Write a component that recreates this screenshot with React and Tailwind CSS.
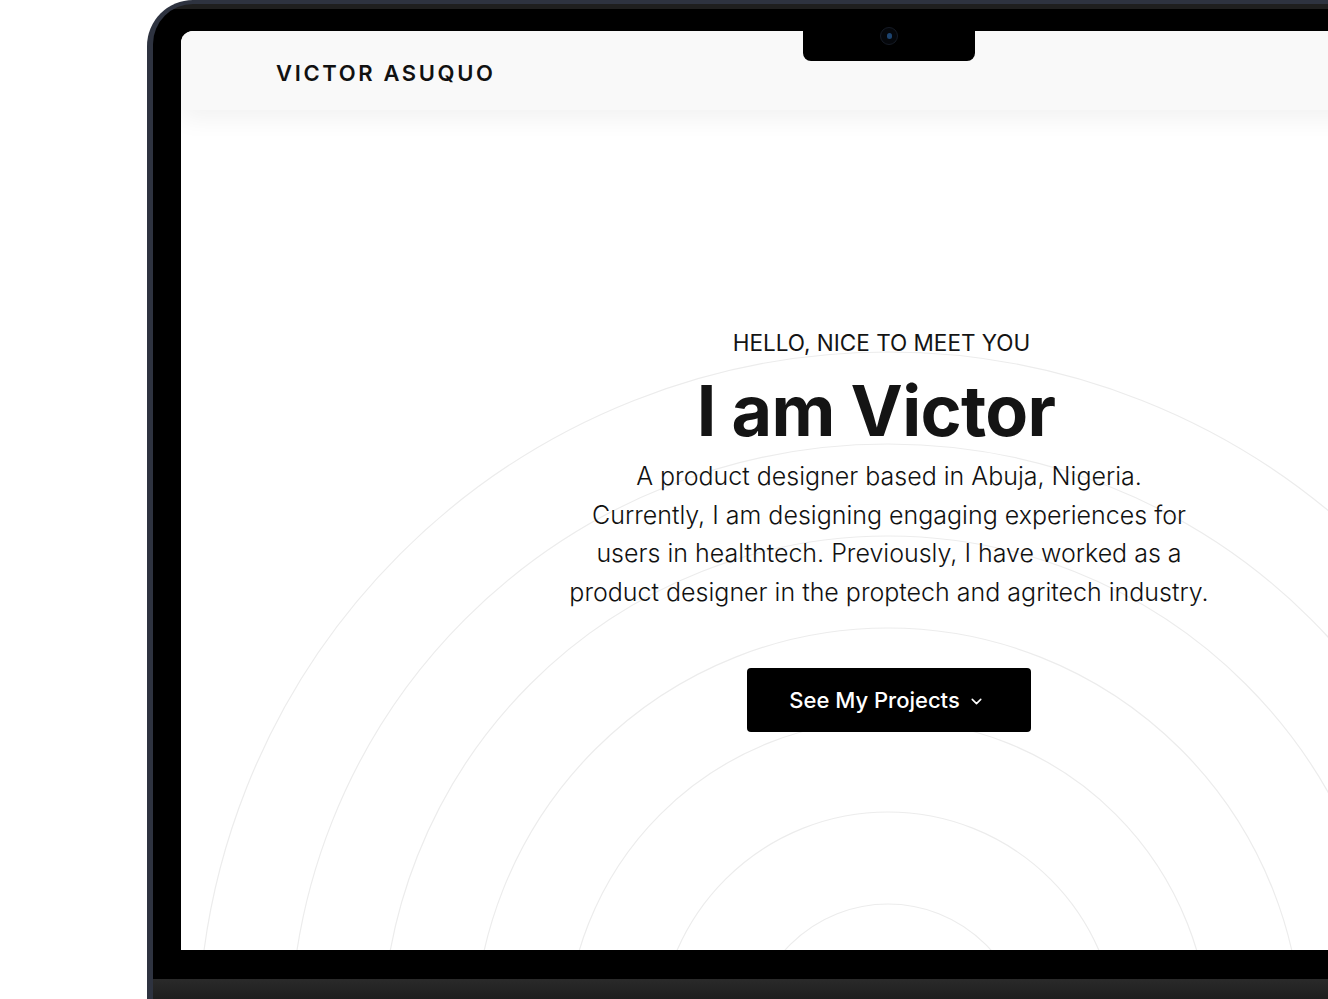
import { ChevronDown } from 'lucide-react';

// radii of the faint rings behind the hero
const RINGS = [138, 230, 322, 414, 506, 598, 690];

function Rings() {
  return (
    <svg
      className="absolute inset-0 z-0 pointer-events-none"
      width="1416"
      height="919"
      viewBox="0 0 1416 919"
      fill="none"
    >
      {RINGS.map((r) => (
        <circle key={r} cx="707" cy="1011" r={r} stroke="#ececec" strokeWidth="1.2" />
      ))}
    </svg>
  );
}

function Notch() {
  return (
    <div className="absolute left-[650px] top-[23px] z-30 w-[172px] h-[34px] bg-black rounded-b-[8px] flex justify-center">
      <div className="w-[18px] h-[18px] rounded-full bg-[#05070b] border border-[#151b26] flex items-center justify-center">
        <div className="w-[5px] h-[6px] rounded-full bg-[#1d4470]" />
      </div>
    </div>
  );
}

function Screen() {
  return (
    <div className="relative w-[1416px] h-[919px] overflow-hidden rounded-tl-[12px] bg-white flex flex-col">
      <Rings />

      {/* === NAVBAR === */}
      <header className="relative z-10 h-[79px] shrink-0 bg-[#f9f9f9] shadow-[0_10px_22px_rgba(0,0,0,0.05)] flex items-center pl-[95px]">
        <span className="pt-[6px] text-[22px] font-semibold tracking-[0.12em] text-[#111]">
          VICTOR ASUQUO
        </span>
      </header>

      {/* === HERO === */}
      <section className="relative z-10 flex flex-col items-center pt-[219px] text-[#141414]">
        <p className="pr-[15px] text-[22.5px] leading-[28px] uppercase">Hello, nice to meet you</p>
        <h1 className="mt-[14px] pr-[26px] text-[70px] leading-[80px] font-bold tracking-[-0.01em]">
          I am Victor
        </h1>
        <p className="mt-[6px] text-center text-[25px] leading-[38.5px] font-light text-[#111]">
          <span className="block">A product designer based in Abuja, Nigeria.</span>
          <span className="block">Currently, I am designing engaging experiences for</span>
          <span className="block">users in healthtech. Previously, I have worked as a</span>
          <span className="block">product designer in the proptech and agritech industry.</span>
        </p>
        <button className="mt-[57px] w-[284px] h-[64px] rounded-[4px] bg-black text-white flex items-center justify-center gap-[8px] pr-[4px]">
          <span className="text-[22px] font-medium">See My Projects</span>
          <ChevronDown size={17} strokeWidth={2.2} className="mt-[3px]" />
        </button>
      </section>
    </div>
  );
}

export default function App() {
  return (
    <div className="w-[1328px] h-[999px] overflow-hidden bg-white font-['Inter',sans-serif]">
      {/* laptop body */}
      <div className="ml-[147px] w-[1483px] h-[999px] rounded-tl-[46px] bg-[#2e3340] pl-[6px] pt-[4px] flex flex-col">
        <div className="relative flex-1 rounded-tl-[40px] bg-[linear-gradient(to_bottom,#1f1f1f_0px,#1f1f1f_5px,#000_5px)] pl-[28px] pt-[27px] pb-[29px]">
          <Notch />
          <Screen />
        </div>
        <div className="h-[20px] shrink-0 bg-[linear-gradient(to_bottom,#2a2a2a,#1e1e1e)]" />
      </div>
    </div>
  );
}
